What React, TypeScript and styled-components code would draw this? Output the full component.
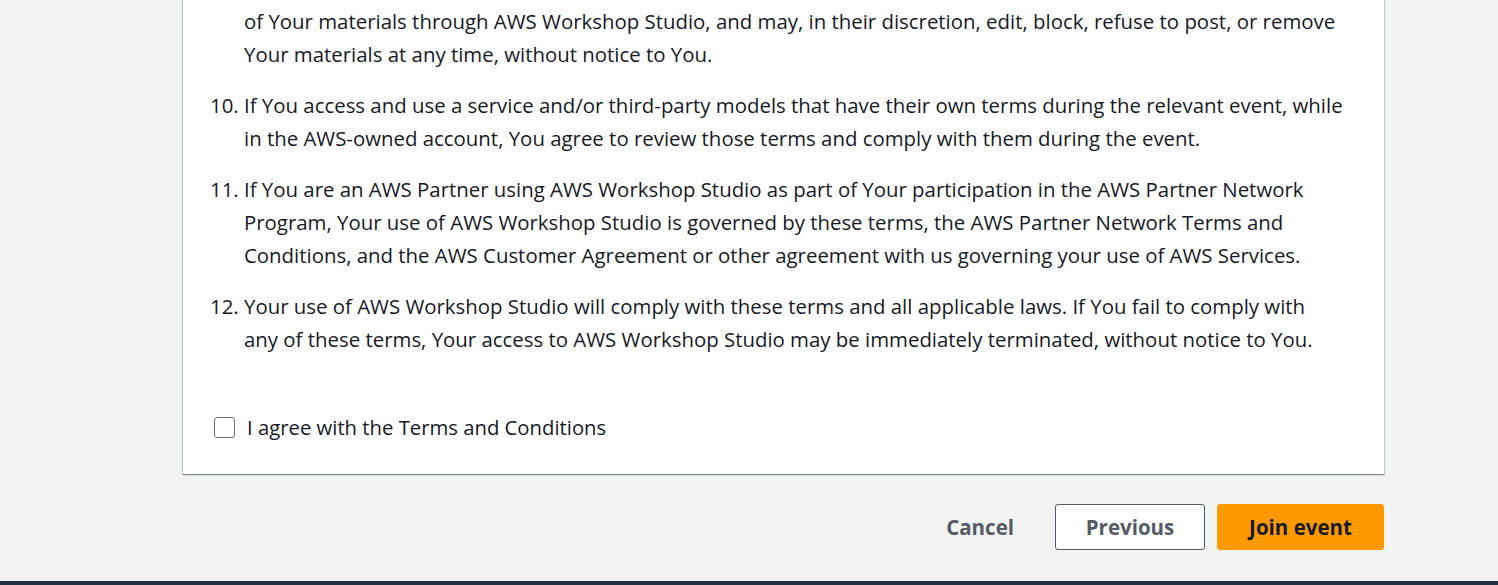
import React from "react";
import styled, { createGlobalStyle } from "styled-components";

const Global = createGlobalStyle`
  html, body { margin: 0; padding: 0; }
  body {
    background: #f2f3f3;
    font-family: "Open Sans", "Noto Sans", sans-serif;
    color: #16191f;
    overflow: hidden;
    height: 585px;
  }
`;

const Page = styled.div`
  display: flex;
  flex-direction: column;
`;

const Main = styled.main`
  display: flex;
  flex-direction: column;
  align-items: flex-end;
  padding: 0 114px 31px 183px;
`;

const Card = styled.section`
  align-self: stretch;
  background: #ffffff;
  margin-top: -68px;
  padding: 32px 30px 30px 30px;
  box-shadow: 0 1px 1px 0 rgba(0, 28, 36, 0.3), 1px 1px 1px 0 rgba(0, 28, 36, 0.15),
    -1px 1px 1px 0 rgba(0, 28, 36, 0.15);
`;

const List = styled.ol`
  margin: 0;
  padding-left: 31px;
  font-size: 20.4px;
  line-height: 33px;
`;

const Item = styled.li`
  margin-bottom: 18px;
  &:last-child { margin-bottom: 0; }
`;

const ScrolledLine = styled.span`
  display: block;
  line-height: 41px;
`;

const Agree = styled.label`
  display: flex;
  align-items: center;
  gap: 12px;
  margin-top: 55px;
  font-size: 20.3px;
  line-height: 33px;
`;

const Box = styled.span`
  width: 21px;
  height: 21px;
  box-sizing: border-box;
  margin-left: 1px;
  border: 1.5px solid #687078;
  border-radius: 3px;
  background: #fff;
  flex: none;
`;

const Actions = styled.div`
  display: flex;
  gap: 12px;
  margin-top: 30px;
`;

const Button = styled.button<{ $variant: "link" | "normal" | "primary" }>`
  font-family: "Open Sans", "Noto Sans", sans-serif;
  font-weight: 700;
  font-size: 20.5px;
  height: 46px;
  border-radius: 3px;
  cursor: pointer;
  box-sizing: border-box;
  padding: 0 28px;
  border: 1px solid
    ${(p) => (p.$variant === "normal" ? "#545b64" : p.$variant === "primary" ? "#ff9900" : "transparent")};
  background: ${(p) => (p.$variant === "primary" ? "#ff9900" : p.$variant === "normal" ? "#ffffff" : "transparent")};
  color: ${(p) => (p.$variant === "primary" ? "#16191f" : "#545b64")};
`;

const Footer = styled.footer`
  height: 40px;
  background: #232f3e;
`;

export default function App() {
  return (
    <Page>
      <Global />
      <Main>
        <Card>
          <List start={9}>
            <Item>
              <ScrolledLine>
                AWS may, but is not obligated to, monitor or review any use by You or others in the events or workshop content
              </ScrolledLine>
              of Your materials through AWS Workshop Studio, and may, in their discretion, edit, block, refuse to post, or remove
              <br />
              Your materials at any time, without notice to You.
            </Item>
            <Item>
              If You access and use a service and/or third-party models that have their own terms during the relevant event, while
              <br />
              in the AWS-owned account, You agree to review those terms and comply with them during the event.
            </Item>
            <Item>
              If You are an AWS Partner using AWS Workshop Studio as part of Your participation in the AWS Partner Network
              <br />
              Program, Your use of AWS Workshop Studio is governed by these terms, the AWS Partner Network Terms and
              <br />
              Conditions, and the AWS Customer Agreement or other agreement with us governing your use of AWS Services.
            </Item>
            <Item>
              Your use of AWS Workshop Studio will comply with these terms and all applicable laws. If You fail to comply with
              <br />
              any of these terms, Your access to AWS Workshop Studio may be immediately terminated, without notice to You.
            </Item>
          </List>
          <Agree>
            <Box />
            I agree with the Terms and Conditions
          </Agree>
        </Card>
        <Actions>
          <Button $variant="link">Cancel</Button>
          <Button $variant="normal" style={{ width: 150 }}>Previous</Button>
          <Button $variant="primary" style={{ width: 167 }}>Join event</Button>
        </Actions>
      </Main>
      <Footer />
    </Page>
  );
}
